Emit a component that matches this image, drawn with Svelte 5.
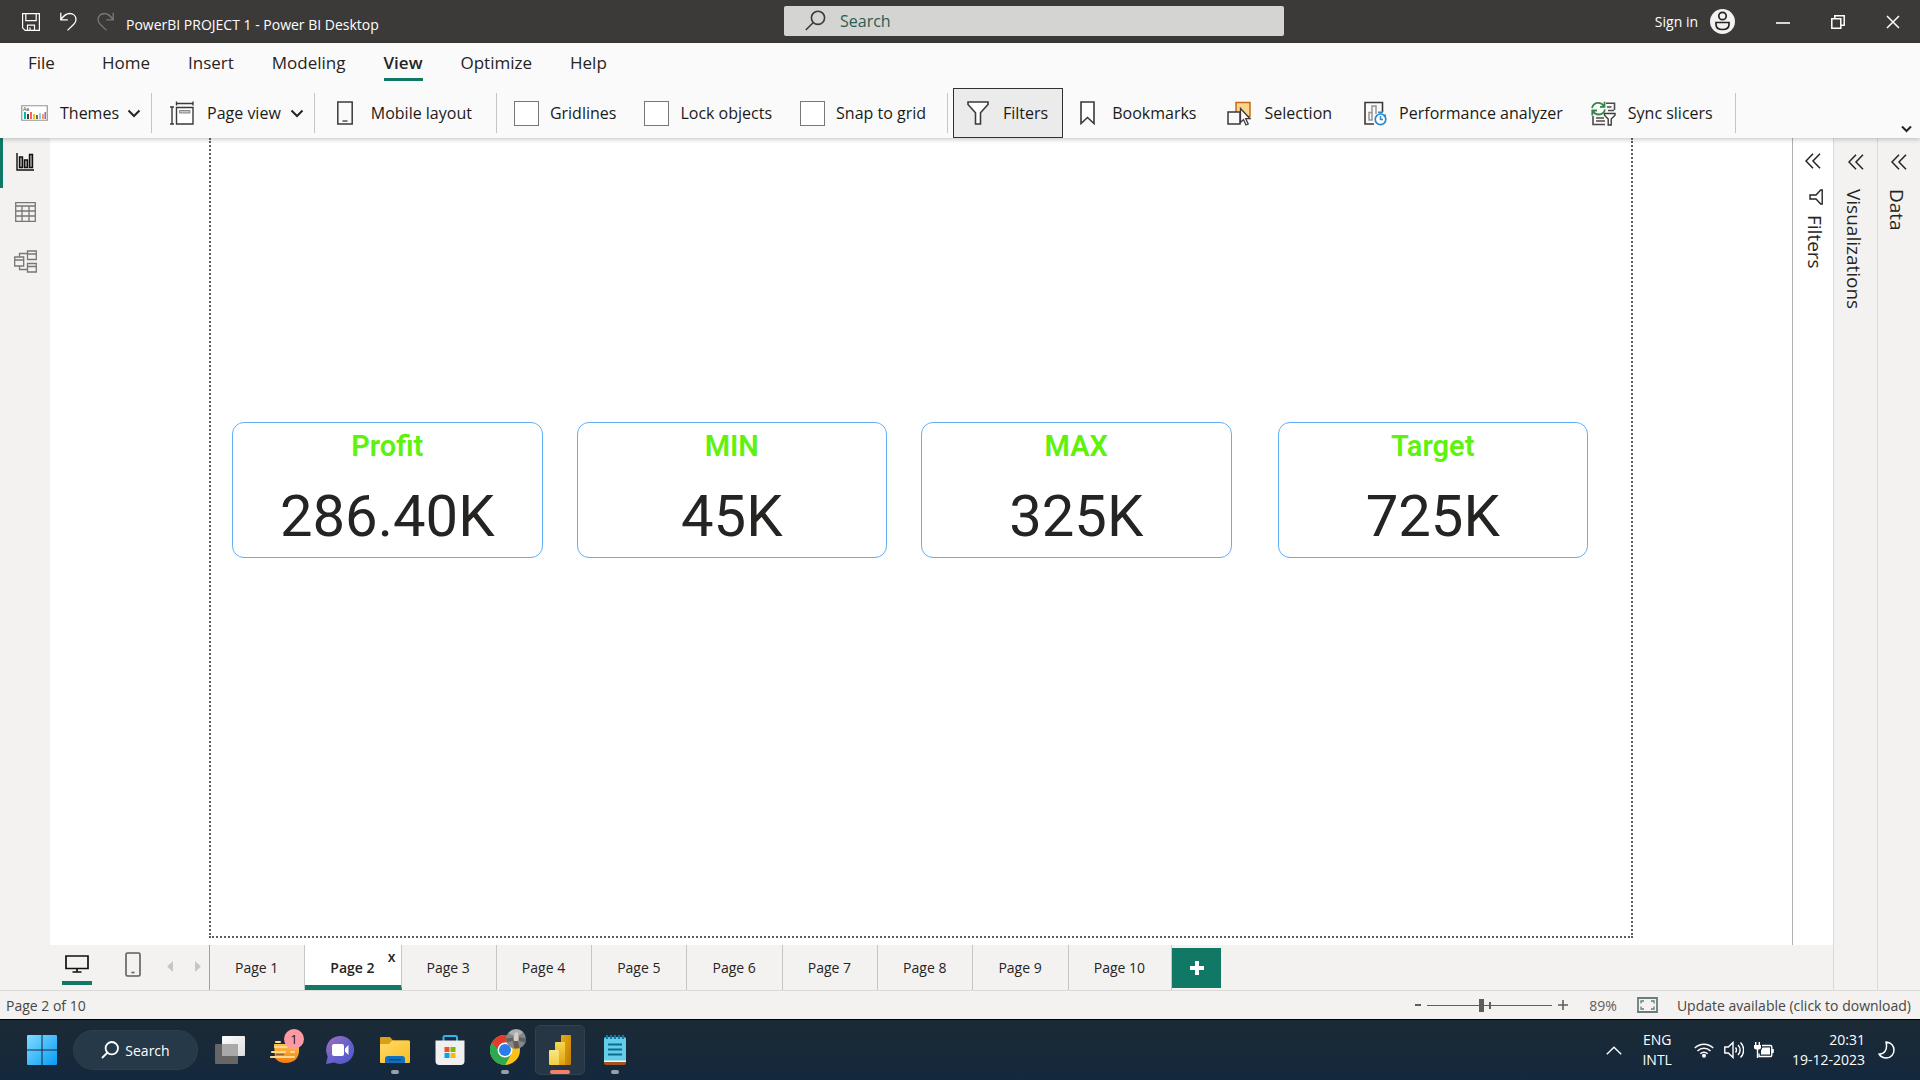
<script>
  const menus = ['File', 'Home', 'Insert', 'Modeling', 'View', 'Optimize', 'Help'];
  const toggles = ['Gridlines', 'Lock objects', 'Snap to grid'];
  const cards = [
    { title: 'Profit', value: '286.40K' },
    { title: 'MIN', value: '45K' },
    { title: 'MAX', value: '325K' },
    { title: 'Target', value: '725K' }
  ];
  const pages = Array.from({ length: 10 }, (_, i) => `Page ${i + 1}`);
  let activeMenu = $state('View');
  let activePage = $state('Page 2');
  let zoom = $state(43);
</script>

{#snippet chevron()}
  <svg class="chev" width="14" height="9" viewBox="0 0 14 9"><path d="M1.5 1.5 7 7l5.5-5.5" fill="none" stroke="#252423" stroke-width="2" /></svg>
{/snippet}

{#snippet collapse()}
  <svg width="16" height="16" viewBox="0 0 16 16"><path d="M8 .8 1 8l7 7.200M15 .8 8 8l7 7.200" fill="none" stroke="#252423" stroke-width="1.500" /></svg>
{/snippet}

<div class="app">
  <header class="titlebar">
    <div class="quick">
      <button aria-label="Save"><svg width="18" height="18" viewBox="0 0 18 18" fill="none" stroke="#fff" stroke-width="1.200"><path d="M.6.6h16.800v16.800H3.200L.6 14.800zM3.800.6v7h10.400v-7M5.500 17.400v-5.200h7v5.200M8 17v-2.500" /></svg></button>
      <button aria-label="Undo"><svg width="17" height="19" viewBox="0 0 17 19" fill="none" stroke="#fff" stroke-width="1.300"><path d="M.8.8v7h7M.8 7.600C3.500 4 5.800 1.500 9.500 1.500c3.800 0 6.500 2.500 6.500 6 0 2-.8 3.400-2.200 4.800L7.500 18.400" /></svg></button>
      <button aria-label="Redo" disabled><svg width="17" height="19" viewBox="0 0 17 19" fill="none" stroke="#7c7a78" stroke-width="1.300"><path d="M16.200.8v7h-7M16.200 7.600C13.500 4 11.200 1.500 7.500 1.500 3.700 1.500 1 4 1 7.500c0 2 .8 3.400 2.200 4.800l6.300 6.100" /></svg></button>
      <span class="doc">PowerBI PROJECT 1 - Power BI Desktop</span>
    </div>
    <label class="search">
      <svg width="21" height="21" viewBox="0 0 21 21" fill="none" stroke="#3b3a39" stroke-width="1.600"><circle cx="13" cy="7.800" r="6.600" /><path d="M8.300 12.500.8 20" /></svg>
      <input type="text" placeholder="Search" aria-label="Search" />
    </label>
    <div class="window">
      <button class="signin">Sign in
        <svg width="25" height="25" viewBox="0 0 25 25"><circle cx="12.500" cy="12.500" r="12.500" fill="#f3f2f1" /><g fill="none" stroke="#252423" stroke-width="1.700"><circle cx="12.500" cy="7" r="3.700" /><path d="M6 13.500h13v2c0 3.300-2.800 5-6.500 5S6 18.800 6 15.500z" /></g></svg>
      </button>
      <button aria-label="Minimize"><svg width="14" height="14" viewBox="0 0 14 14"><path d="M0 8h14" stroke="#fff" stroke-width="1.600" /></svg></button>
      <button aria-label="Restore"><svg width="14" height="14" viewBox="0 0 14 14" fill="none" stroke="#fff" stroke-width="1.500"><path d="M.8 3.800h9v9.400h-9zM3.800 3.800v-3h9.400v9.400H9.800" /></svg></button>
      <button aria-label="Close"><svg width="14" height="14" viewBox="0 0 14 14"><path d="m1 1 12 12M13 1 1 13" stroke="#fff" stroke-width="1.500" /></svg></button>
    </div>
  </header>

  <div class="ribbon">
    <nav class="menus">
      {#each menus as m}
        <button class:active={m === activeMenu} onclick={() => (activeMenu = m)}>{m}</button>
      {/each}
    </nav>
    <div class="tools">
      <button class="tool themes">
        <svg width="27" height="16" viewBox="0 0 27 16"><path d="M.75.75h25.500v14.500H.75z" fill="#fff" stroke="#979593" stroke-width="1.200" /><text x="2" y="6" font-size="5" font-family="Liberation Sans" fill="#3b3a39">Aa</text><path d="M3 7h2v7H3z" fill="#01b8aa" /><path d="M6 9h2v5H6z" fill="#374649" /><path d="M9 7h2v7H9z" fill="#fd625e" /><path d="M12 9h2v5h-2z" fill="#f2c80f" /><path d="M15 10h2v4h-2z" fill="#5f6b6d" /><path d="M18 8h2v6h-2z" fill="#8ad4eb" /><path d="M21 9h2v5h-2z" fill="#fe9666" /><path d="M23.500 7h1.500v7h-1.500z" fill="#a66999" /></svg>
        <span>Themes</span>{@render chevron()}
      </button>
      <i class="sep"></i>
      <button class="tool pageview">
        <svg width="24" height="24" viewBox="0 0 24 24" fill="none" stroke="#3b3a39" stroke-width="1.400"><path d="M6.500 6.500h16.500v16.500H6.500z" fill="#fff" /><path d="M9.500 9.500h10.500v2.500H9.500z" fill="#c8c6c4" stroke="#8a8886" stroke-width="1" /><path d="M6.500 2.500h16.500M6.500.5v4M23 .5v4M2 6v17M0 6h4M0 23h4" /></svg>
        <span>Page view</span>{@render chevron()}
      </button>
      <i class="sep"></i>
      <button class="tool mobile">
        <svg width="16" height="24" viewBox="0 0 16 24" fill="none" stroke="#3b3a39" stroke-width="1.500"><path d="M.8 1h14.400v22H.8z" /><path d="M5.500 20h5" stroke-width="1.300" /></svg>
        <span>Mobile layout</span>
      </button>
      <i class="sep"></i>
      <div class="checks">
        {#each toggles as t}
          <label><input type="checkbox" /><span>{t}</span></label>
        {/each}
      </div>
      <i class="sep"></i>
      <button class="tool pressed" aria-pressed="true">
        <svg width="22" height="24" viewBox="0 0 22 24" fill="#fff" stroke="#3b3a39" stroke-width="1.600"><path d="M1 1h20v2.500l-7.500 8.300V23h-5V11.800L1 3.500z" /></svg>
        <span>Filters</span>
      </button>
      <button class="tool bookmarks">
        <svg width="15" height="24" viewBox="0 0 15 24" fill="#fff" stroke="#3b3a39" stroke-width="1.600"><path d="M1 1h13v21.500l-6.500-6-6.500 6z" /></svg>
        <span>Bookmarks</span>
      </button>
      <button class="tool selection">
        <svg width="25" height="25" viewBox="0 0 25 25"><path d="M9 1.500h14v14H9z" fill="#fad489" stroke="#c36b16" stroke-width="1.500" /><path d="M1 11h12v12H1z" fill="#fafafa" stroke="#3b3a39" stroke-width="1.500" /><path d="M13.500 7.500v14l3-3 2.500 5.500 2.200-1-2.500-5.300H23z" fill="#fff" stroke="#3b3a39" stroke-width="1.300" /></svg>
        <span>Selection</span>
      </button>
      <button class="tool performance">
        <svg width="23" height="25" viewBox="0 0 23 25" fill="none"><path d="M10 23H1V1.500h17.500V11" stroke="#3b3a39" stroke-width="1.600" /><path d="M5 19v-7.500h3V19zM8 19V5h4v8" stroke="#979593" stroke-width="1.500" /><circle cx="16.500" cy="18.300" r="5.300" fill="#fff" stroke="#2e87c8" stroke-width="1.700" /><path d="M16.500 15v3.500h2.500M14 11.300h5M16.500 11v2M20.500 13.500l1.300 1.300" stroke="#2e87c8" stroke-width="1.500" /></svg>
        <span>Performance analyzer</span>
      </button>
      <button class="tool sync">
        <svg width="25" height="25" viewBox="0 0 25 25" fill="none"><path d="M15 2.300h8.500V9M2 15v8.500h12M16 6h4.500M17 9.500h6M5 17h8M5 20h9" stroke="#4c4b4a" stroke-width="1.600" /><path d="M1 7c.8-3.200 3.300-5.200 6.300-5.200 2.600 0 4.400 1.200 5.700 3.400M13.500.8v5H9M14 8.500c-.8 3-3.300 5-6.300 5-2.600 0-4.400-1.200-5.700-3.300M1.300 14.500v-5H6" stroke="#38874a" stroke-width="1.800" /><path d="M13.500 12.500h10.500v1.700l-3.800 3.800v6h-3v-6l-3.700-3.800z" fill="#fff" stroke="#3b3a39" stroke-width="1.400" /></svg>
        <span>Sync slicers</span>
      </button>
      <i class="sep"></i>
      <button class="expand" aria-label="Collapse ribbon"><svg width="11" height="8" viewBox="0 0 11 8"><path d="m1 1.500 4.500 4.500L10 1.500" fill="none" stroke="#252423" stroke-width="2" /></svg></button>
    </div>
  </div>

  <main>
    <nav class="rail">
      <button class="on" aria-label="Report view"><svg width="18" height="18" viewBox="0 0 18 18" fill="#a19f9d" stroke="#111" stroke-width="1.400"><path d="M1 0v17h17" fill="none" /><path d="M3.500 4h3v10.500h-3zM8.500 7h3v7.500h-3zM13.500 1.500h3v13h-3z" /></svg></button>
      <button aria-label="Table view"><svg width="21" height="20" viewBox="0 0 21 20" fill="none" stroke="#797775" stroke-width="1.300"><path d="M.7.7h19.600v18.600H.7zM.7 4h19.600M.7 9h19.600M.7 14h19.600M7 4v15M14 4v15" /></svg></button>
      <button aria-label="Model view"><svg width="23" height="23" viewBox="0 0 23 23" fill="none" stroke="#797775" stroke-width="1.300"><path d="M13.500 1h8.800v8.500h-8.800zM13.500 4h8.800M13.500 13.500h8.800V22h-8.800zM13.500 16.500h8.800M.7 7h9v9h-9zM.7 10h9M5.500 7V3.500h8M5.500 16v3.500h8" /></svg></button>
    </nav>

    <div class="center">
      <div class="work">
        <div class="canvas">
          <section class="page">
            {#each cards as c}
              <article class="card">
                <h2>{c.title}</h2>
                <p>{c.value}</p>
              </article>
            {/each}
          </section>
        </div>
        <aside class="pane filters">
          <button aria-label="Expand filters">{@render collapse()}</button>
          <svg class="funnel" width="14" height="16" viewBox="0 0 14 16"><path d="M13.200 1v14h-1.500L7 10H1V6h6l4.700-5z" fill="none" stroke="#252423" stroke-width="1.400" /></svg>
          <h3>Filters</h3>
        </aside>
      </div>

      <div class="tabs">
        <div class="layouts">
          <button class="desktop" aria-label="Desktop layout"><svg width="24" height="18" viewBox="0 0 24 18" fill="none" stroke="#111" stroke-width="1.700"><path d="M1 1h22v12.500H1zM12 13.500V17M7.500 17h9" /></svg></button>
          <button class="phone" aria-label="Phone layout"><svg width="16" height="25" viewBox="0 0 16 25" fill="none" stroke="#605e5c" stroke-width="1.600"><rect x="1" y="1" width="14" height="23" rx="1.500" /><path d="M6.500 20.500h3" /></svg></button>
          <button class="arrow" aria-label="Previous pages"><svg width="6" height="11" viewBox="0 0 6 11"><path d="M6 0v11L0 5.500z" fill="#c8c6c4" /></svg></button>
          <button class="arrow" aria-label="Next pages"><svg width="6" height="11" viewBox="0 0 6 11"><path d="M0 0v11l6-5.500z" fill="#c8c6c4" /></svg></button>
        </div>
        {#each pages as p}
          <div class="tab" class:current={p === activePage}>
            <button onclick={() => (activePage = p)}>{p}</button>
            {#if p === activePage}<button class="close" aria-label="Delete page">x</button>{/if}
          </div>
        {/each}
        <button class="add" aria-label="New page"><svg width="14" height="14" viewBox="0 0 14 14"><path d="M7 0v14M0 7h14" stroke="#fff" stroke-width="4" /></svg></button>
      </div>
    </div>

    <aside class="pane visuals">
      <button aria-label="Expand visualizations">{@render collapse()}</button>
      <h3>Visualizations</h3>
    </aside>
    <aside class="pane">
      <button aria-label="Expand data">{@render collapse()}</button>
      <h3>Data</h3>
    </aside>
  </main>

  <footer class="status">
    <span>Page 2 of 10</span>
    <div class="zoom">
      <button aria-label="Zoom out"><svg width="6" height="10" viewBox="0 0 6 10"><path d="M0 5h6" stroke="#605e5c" stroke-width="2" /></svg></button>
      <input type="range" min="0" max="100" bind:value={zoom} aria-label="Zoom" />
      <button aria-label="Zoom in"><svg width="10" height="10" viewBox="0 0 10 10"><path d="M0 5h10M5 0v10" stroke="#605e5c" stroke-width="1.600" /></svg></button>
    </div>
    <span class="percent">89%</span>
    <button class="fit" aria-label="Fit to page"><svg width="21" height="16" viewBox="0 0 21 16" fill="none" stroke="#6b7c7c" stroke-width="1.800"><path d="M1 1h19v14H1z" /><path d="M7 4H4v2.500M14 4h3v2.500M7 12H4V9.500M14 12h3V9.500" stroke-width="1.300" /></svg></button>
    <a href="#update">Update available (click to download)</a>
  </footer>

  <footer class="taskbar">
    <button class="start" aria-label="Start"><svg width="30" height="30" viewBox="0 0 30 30"><defs><linearGradient id="win" x1="0" y1="0" x2="1" y2="1"><stop offset="0" stop-color="#7fdcff" /><stop offset="1" stop-color="#0a9bf5" /></linearGradient></defs><path d="M0 1q0-1 1-1h13.500v14.500H0zM15.500 0H29q1 0 1 1v13.500H15.500zM0 15.500h14.500V30H1q-1 0-1-1zM15.500 15.500H30V29q0 1-1 1H15.500z" fill="url(#win)" /></svg></button>
    <button class="find"><svg width="18" height="18" viewBox="0 0 18 18" fill="none" stroke="#fff" stroke-width="1.800"><circle cx="10.800" cy="7.200" r="6.200" /><path d="M6.500 11.500 1 17" /></svg>Search</button>
    <div class="apps">
      <button aria-label="Task view"><svg width="30" height="28" viewBox="0 0 30 28"><defs><linearGradient id="tv" x1="0" y1="0" x2="1" y2="1"><stop offset="0" stop-color="#fff" /><stop offset="1" stop-color="#dcdcdc" /></linearGradient></defs><rect x="7" width="23" height="20" rx="1" fill="url(#tv)" /><rect y="8" width="23" height="20" rx="1" fill="#666" /><path d="M7 8h16v12H7z" fill="#a9a9a9" /></svg></button>
      <button aria-label="Weather alerts"><svg width="30" height="30" viewBox="0 0 30 30"><defs><linearGradient id="sun" x1="0" y1="0" x2="0" y2="1"><stop offset="0" stop-color="#ffc04a" /><stop offset="1" stop-color="#f07a12" /></linearGradient></defs><path d="M4 9h25v7c0 7-5 12-13 12-5 0-9-2-11-5z" fill="url(#sun)" /><g stroke="#ffd98a" stroke-width="2.200" stroke-linecap="round"><path d="M6 7h4M5 12h12M2 17h13M1 22h23M21 17h3" /></g><path d="M6 19.500h8" stroke="#9a6022" stroke-width="1.500" /></svg><span class="badge">1</span></button>
      <button aria-label="Chat"><svg width="30" height="30" viewBox="0 0 30 30"><defs><linearGradient id="ch" x1="0" y1="0" x2="1" y2="1"><stop offset="0" stop-color="#a66fb8" /><stop offset=".5" stop-color="#6962cc" /><stop offset="1" stop-color="#4e58c8" /></linearGradient></defs><path d="M15 1a14 14 0 1 1-6 26.600L1 29l1.700-7.500A14 14 0 0 1 15 1z" fill="url(#ch)" /><rect x="7" y="9" width="12" height="12" rx="2" fill="#fff" /><path d="m20 13.500 3.500-3.500v10L20 16.500z" fill="#fff" /></svg></button>
      <button aria-label="File Explorer" class="open"><svg width="30" height="28" viewBox="0 0 30 28"><defs><linearGradient id="fo" x1="0" y1="0" x2="1" y2="1"><stop offset="0" stop-color="#ffdb68" /><stop offset="1" stop-color="#f9bd24" /></linearGradient></defs><path d="M0 2q0-1 1-1h9l3 3.500h15q1 0 1 1V12H0z" fill="#d9a015" /><path d="M0 8h9l3-3.500h17q1 0 1 1V26q0 1-1 1H1q-1 0-1-1z" fill="url(#fo)" /><path d="M5 27v-4q0-3 3-3h14q3 0 3 3v4z" fill="#1270c0" /><path d="M9 23.800h12" stroke="#0a4a8c" stroke-width="1.400" /></svg></button>
      <button aria-label="Microsoft Store"><svg width="30" height="30" viewBox="0 0 30 30"><path d="M8.500 7V2.500q0-1.500 1.500-1.500h10.500Q22 1 22 2.500V7" fill="none" stroke="#2fb4ee" stroke-width="2" /><path d="M.5 5.500h29V26q0 4-4 4h-21q-4 0-4-4z" fill="#f0f0f0" /><path d="M9.500 12h5v5h-5z" fill="#f25022" /><path d="M15.500 12h5v5h-5z" fill="#7fba00" /><path d="M9.500 18h5v5h-5z" fill="#00a4ef" /><path d="M15.500 18h5v5h-5z" fill="#ffb900" /></svg></button>
      <button aria-label="Chrome" class="open"><svg width="30" height="30" viewBox="0 0 30 30"><circle cx="15" cy="15" r="15" fill="#fbc116" /><path d="M15 15 2 7.500A15 15 0 0 0 15 30l6.500-11.300z" fill="#2da94f" /><path d="M15 15H8.500L2 7.500A15 15 0 0 1 28 7.500H15z" fill="#e33b2e" /><circle cx="15" cy="15" r="7.500" fill="#fff" /><circle cx="15" cy="15" r="6" fill="#2b7de9" /></svg>
        <svg class="profile" width="20" height="20" viewBox="0 0 20 20"><circle cx="10" cy="10" r="10" fill="#85898a" /><path d="M2.500 4A10 10 0 0 1 17 3l-3 3H6z" fill="#a9b0b2" /><path d="M0 9.500 8 8v4l-7 1zM13 8l7 1.500-.6 4L13 12z" fill="#5d6462" /><path d="M9 3.500h3l.7 5.500-1.200 6H8L7.500 8z" fill="#d8cdc5" /><path d="M7 12h5l1.500 6.500-5 1z" fill="#6a5a52" /></svg></button>
      <button aria-label="Power BI" class="open focused"><svg width="30" height="30" viewBox="0 0 30 30"><defs><linearGradient id="p1" x1="0" y1="0" x2="1" y2="1"><stop offset="0" stop-color="#e8ad0e" /><stop offset="1" stop-color="#c17a0a" /></linearGradient><linearGradient id="p2" x1="0" y1="0" x2="0" y2="1"><stop offset="0" stop-color="#f6d751" /><stop offset="1" stop-color="#dda20c" /></linearGradient><linearGradient id="p3" x1="0" y1="0" x2="0" y2="1"><stop offset="0" stop-color="#f9e589" /><stop offset="1" stop-color="#f2cd3d" /></linearGradient></defs><rect x="16" width="10" height="30" rx="1" fill="url(#p1)" /><rect x="10" y="7" width="10" height="23" rx="1" fill="url(#p2)" /><rect x="4" y="15" width="10" height="15" rx="1" fill="url(#p3)" /></svg></button>
      <button aria-label="Notepad" class="open"><svg width="22" height="30" viewBox="0 0 22 30"><path d="M0 26h22v2q0 2-2 2H2q-2 0-2-2z" fill="#a3521d" /><path d="M0 23h22v4H0z" fill="#f3f3f3" /><path d="M0 4q0-2 2-2h18q2 0 2 2v21.500H0z" fill="#63cdea" /><path d="M4 9.500h14M4 14.500h14M4 19.500h14" stroke="#0d6c90" stroke-width="1.800" /><path d="M3 0v4M7 0v4M11 0v4M15 0v4M19 0v4" stroke="#0d7ba3" stroke-width="2.200" /></svg></button>
    </div>
    <div class="tray">
      <button class="caret" aria-label="Show hidden icons"><svg width="16" height="9" viewBox="0 0 16 9"><path d="m.8 8.200 7.200-7 7.200 7" fill="none" stroke="#fff" stroke-width="1.400" /></svg></button>
      <button class="lang">ENG<br />INTL</button>
      <button class="sys" aria-label="Network, sound, battery">
        <svg width="20" height="16" viewBox="0 0 20 16" fill="none" stroke="#fff" stroke-width="1.500"><path d="M.8 6a13 13 0 0 1 18.400 0M3.500 9a9.300 9.300 0 0 1 13 0M6.300 11.800a5.300 5.300 0 0 1 7.400 0" /><circle cx="10" cy="13.800" r="1.300" fill="#fff" /></svg>
        <svg width="20" height="18" viewBox="0 0 20 18" fill="none" stroke="#fff" stroke-width="1.400"><path d="M.8 6h3.500L9 1.500v15L4.300 12H.8zM11.500 6.500a4 4 0 0 1 0 5M14 4a7 7 0 0 1 0 10M16.500 1.500a10.500 10.500 0 0 1 0 15" /></svg>
        <svg width="20" height="17" viewBox="0 0 20 17" fill="none" stroke="#fff" stroke-width="1.400"><path d="M8 3.500h8.500q1.300 0 1.300 1.300v8.400q0 1.300-1.300 1.300H5v-3" /><path d="M8.500 5.500H16v7H7V8.500z" fill="#fff" stroke="none" /><path d="M18.800 7v4" stroke-width="2" /><path d="M0 3h7v2.500q0 2-3.500 2T0 5.500z" fill="#fff" stroke="none" /><path d="M1.700 0v3M5.300 0v3M3.500 7v9" /></svg>
      </button>
      <button class="clock">20:31<br />19-12-2023</button>
      <svg class="moon" width="17" height="18" viewBox="0 0 17 18"><path d="M8 1c5 .3 8 3.800 8 8s-3 8-7.500 8C5 17 2.500 15.500 1 13c5 .3 9-4 7-12z" fill="none" stroke="#fff" stroke-width="1.500" stroke-linejoin="round" /></svg>
    </div>
  </footer>
</div>

<style>
  :global(body) { margin: 0; }
  .app {
    display: flex;
    flex-direction: column;
    min-height: 100vh;
    font-family: "Open Sans", "Noto Sans", sans-serif;
    font-size: 16px;
    color: #252423;
    background: #f3f2f1;
  }
  .app * { box-sizing: border-box; }
  button { font: inherit; color: inherit; background: none; border: 0; padding: 0; margin: 0; white-space: nowrap; }
  svg { display: block; flex: none; }
  h2, h3, p { margin: 0; }

  .titlebar { display: grid; grid-template-columns: 784px minmax(200px, 500px) 1fr; align-items: center; height: 43px; background: #3b3a38; color: #fff; font-size: 14px; }
  .quick { display: flex; align-items: center; gap: 20px; padding-left: 22px; }
  .doc { padding: 6px 0 0; margin-left: -8px; }
  .search { display: flex; align-items: center; gap: 14px; height: 30px; margin-bottom: 2px; padding: 0 21px; background: #d4d4d2; border-radius: 2px; }
  .search input { flex: 1; min-width: 0; border: 0; outline: 0; padding: 0; background: none; font: inherit; font-size: 16px; color: #2b5c53; }
  .search input::placeholder { color: #2b5c53; opacity: 1; }
  .window { display: flex; align-items: center; justify-content: flex-end; gap: 41px; padding-right: 20px; }
  .signin { display: flex; align-items: center; gap: 12px; }

  .ribbon { position: relative; z-index: 1; height: 95px; background: #fafafa; box-shadow: 0 1px 5px rgba(0, 0, 0, 0.25); }
  .menus { display: flex; gap: 38px; height: 45px; padding-left: 28px; font-size: 17px; }
  .menus button { height: 38px; padding-top: 5px; padding-bottom: 1px; border-bottom: 3px solid transparent; }
  .menus button:first-child { margin-right: 9px; }
  .menus .active { border-color: #117865; font-weight: 600; }
  .tools { display: flex; align-items: center; height: 50px; color: #1b1a19; }
  .tool { display: flex; align-items: center; height: 50px; border: 1px solid transparent; }
  .sep { width: 1px; height: 40px; background: #c8c6c4; flex: none; }
  .themes { gap: 12px; padding: 0 9px 0 20px; }
  .chev { margin-left: -4px; }
  .pageview { gap: 13px; padding: 0 9px 0 17px; }
  .mobile { gap: 18px; padding: 0 23px 0 21px; }
  .checks { display: flex; gap: 28px; padding: 0 21px 0 17px; }
  .checks label { display: flex; align-items: center; gap: 11px; white-space: nowrap; }
  .checks input { appearance: none; width: 25px; height: 25px; margin: 0; background: #fff; border: 1px solid #797775; }
  .pressed { gap: 14px; padding: 0 14px 0 13px; margin-left: 5px; background: #ebebeb; border-color: #323130; }
  .bookmarks { gap: 17px; padding: 0 15px 0 16px; }
  .selection { gap: 12px; padding: 0 15px 0 14px; }
  .performance { gap: 12px; padding: 0 13px 0 15px; }
  .sync { gap: 12px; padding: 0 21px 0 13px; }
  .expand { align-self: flex-end; margin: 0 8px 5px auto; }

  main { flex: 1; display: flex; }
  .rail { width: 50px; flex: none; display: flex; flex-direction: column; background: #f3f2f1; }
  .rail button { display: flex; align-items: center; justify-content: center; height: 50px; padding-bottom: 3px; }
  .rail .on { box-shadow: inset 3px 0 #117865; }
  .center { flex: 1; min-width: 0; display: flex; flex-direction: column; }
  .work { flex: 1; display: flex; background: #fff; }
  .canvas { flex: 1; display: flex; padding: 0 159px 7px; }
  .page { flex: 1; display: flex; align-items: flex-start; gap: 34px; padding: 284px 43px 0 21px; border: 2px dotted #605e5c; border-top: 0; }
  .card { flex: 1; height: 136px; border: 1px solid #62aef7; border-radius: 12px; text-align: center; font-family: Roboto, sans-serif; }
  .card:last-child { margin-left: 12px; }
  .card h2 { padding-top: 5px; font-size: 29px; line-height: 36px; font-weight: 600; color: #5ef20c; }
  .card p { padding-top: 19px; font-size: 58px; line-height: 66px; }

  .pane { display: flex; flex-direction: column; align-items: center; width: 43px; flex: none; padding: 16px 0 0; border-left: 1px solid #dcdad8; background: #f3f2f1; }
  .visuals { width: 44px; }
  .pane h3 { writing-mode: vertical-rl; margin: 19px 4px 0 0; font-size: 19px; line-height: 24px; font-weight: 500; }
  .filters { width: 41px; padding-top: 15px; background: #fff; border-color: #b3b0ad; }
  .filters .funnel { margin: 20px 0 0 6px; }
  .filters h3 { margin: 10px 0 0 3px; }

  .tabs { display: flex; height: 45px; font-size: 14px; }
  .layouts { display: flex; align-items: center; width: 160px; border-right: 1px solid #a19f9d; }
  .desktop { margin: 5px 0 0 12px; padding: 0 3px 8px; border-bottom: 4px solid #117865; }
  .phone { margin: 0 26px 6px 33px; }
  .arrow { margin: 0 22px 2px 0; }
  .tab { position: relative; display: flex; border-right: 1px solid #c8c6c4; }
  .tab button { padding: 0 26px 0 25px; }
  .current { background: #fff; border-bottom: 5px solid #117865; font-weight: 600; }
  .current > button:first-child { padding-top: 5px; }
  .tab .close { position: absolute; top: 3px; right: 5px; padding: 0; line-height: 18px; }
  .add { display: flex; align-items: center; justify-content: center; width: 49px; height: 40px; margin-top: 3px; background: #117865; }

  .status { display: flex; align-items: center; height: 29px; padding: 0 9px 0 6px; border-top: 1px solid #dcdad8; font-size: 14px; color: #484644; }
  .zoom { display: flex; align-items: center; gap: 6px; margin-left: auto; }
  .zoom input { appearance: none; width: 125px; height: 14px; margin: 0; background: linear-gradient(#605e5c, #605e5c) 62px 4px / 2px 7px no-repeat, linear-gradient(#605e5c, #605e5c) 0 7px / 100% 1px no-repeat; }
  .zoom input::-webkit-slider-thumb { appearance: none; width: 5px; height: 13px; background: #605e5c; }
  .percent { margin: 0 20px 0 21px; color: #605e5c; }
  .status a { margin-left: 19px; color: inherit; text-decoration: none; }

  .taskbar { display: flex; align-items: center; height: 61px; border-top: 1px solid #000; background: linear-gradient(#1b2a35, #14283d); color: #fff; font-size: 14px; }
  .start { margin: 0 16px 0 27px; }
  .find { display: flex; align-items: center; justify-content: center; gap: 6px; width: 125px; height: 40px; border-radius: 20px; background: #263948; border: 1px solid #2c3f4d; }
  .apps { display: flex; gap: 5px; margin-left: 7px; }
  .apps button { position: relative; display: flex; align-items: center; justify-content: center; width: 50px; height: 50px; border: 1px solid transparent; border-radius: 5px; }
  .badge { position: absolute; top: 3px; right: 5px; width: 20px; height: 20px; border-radius: 50%; background: #ff99a4; color: #1b1a19; font-size: 13px; line-height: 20px; }
  .profile { position: absolute; top: 3px; right: 3px; }
  .open::after { content: ""; position: absolute; bottom: 0; width: 8px; height: 4px; border-radius: 2px; background: #98a1a9; }
  .apps .focused { background: #273644; border-color: #31414e; }
  .focused::after { width: 20px; background: #f4806a; }
  .tray { display: flex; align-items: center; margin-left: auto; padding-right: 25px; line-height: 20px; }
  .lang { margin: 0 22px 0 20px; }
  .sys { display: flex; align-items: center; gap: 10px; }
  .clock { margin: 0 13px 0 18px; text-align: right; }
</style>
